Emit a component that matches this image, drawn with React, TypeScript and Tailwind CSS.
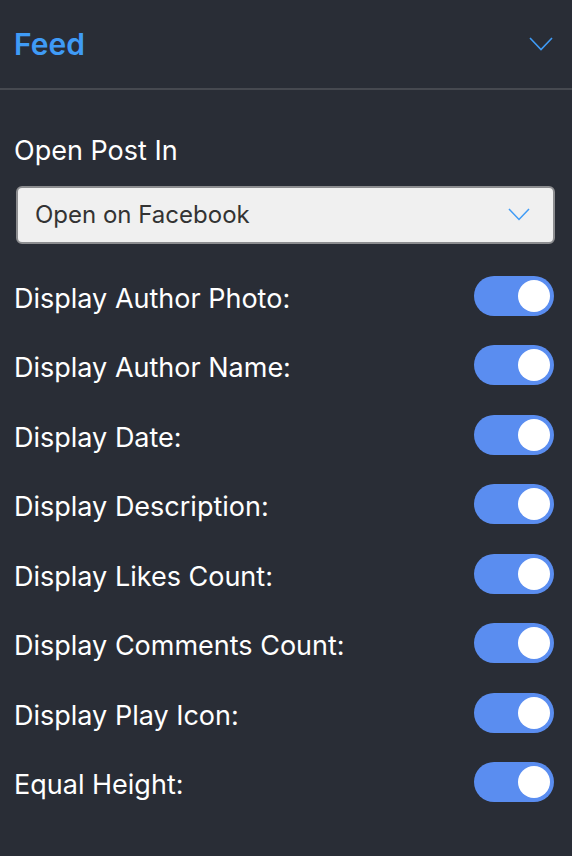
import React from "react";

const items = [
  "Display Author Photo:",
  "Display Author Name:",
  "Display Date:",
  "Display Description:",
  "Display Likes Count:",
  "Display Comments Count:",
  "Display Play Icon:",
  "Equal Height:",
];

function Toggle() {
  return (
    <div className="flex h-[40px] w-[80px] items-center justify-end rounded-full bg-[#5a8df0] pr-[4px]">
      <div className="h-[32px] w-[32px] rounded-full bg-white" />
    </div>
  );
}

export default function App() {
  return (
    <div
      className="min-h-[856px] w-[572px] bg-[#292d36] text-white"
      style={{ fontFamily: "Inter, 'Noto Sans', sans-serif" }}
    >
      <div className="flex h-[90px] items-center justify-between border-b-2 border-[#464950] pl-[14px] pr-[19px]">
        <span className="text-[30px] font-semibold leading-none text-[#3f9bf6]">Feed</span>
        <svg width="24" height="14" viewBox="0 0 24 14" fill="none">
          <path d="M1 1 L12 12.5 L23 1" stroke="#3f9bf6" strokeWidth="1.6" />
        </svg>
      </div>
      <div className="px-[16px]">
        <div className="-ml-[2px] flex h-[44px] items-center pt-[38px] box-content">
          <span className="text-[27px] leading-none">Open Post In</span>
        </div>
        <div className="mt-[13.5px] mr-[1px] flex h-[58.5px] items-center justify-between rounded-[6px] border-2 border-[#8c8d90] bg-[#f0f0f0] pl-[17px] pr-[23px]">
          <span className="text-[24px] leading-none text-[#333333]">Open on Facebook</span>
          <svg width="22" height="13" viewBox="0 0 22 13" fill="none">
            <path d="M1 1 L11 11.5 L21 1" stroke="#3f9bf6" strokeWidth="1.5" />
          </svg>
        </div>
        <div className="mt-[17.3px] flex flex-col">
          {items.map((t) => (
            <div key={t} className="-ml-[2px] mr-[2px] flex h-[69.43px] items-center justify-between">
              <span className="mt-[5px] text-[27px] leading-none">{t}</span>
              <Toggle />
            </div>
          ))}
        </div>
      </div>
    </div>
  );
}
